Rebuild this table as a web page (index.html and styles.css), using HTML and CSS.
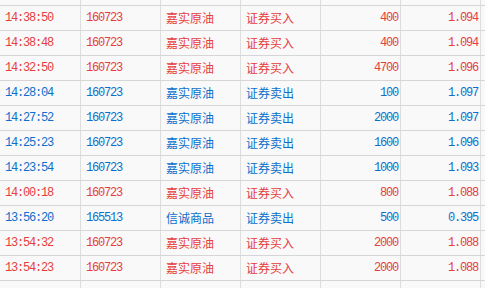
FILE: index.html
```html
<!DOCTYPE html>
<html>
<head>
<meta charset="utf-8">
<link rel="stylesheet" href="styles.css">
</head>
<body>
<div class="table">
  <div class="row top"><div class="c"></div><div class="c"></div><div class="c"></div><div class="c"></div><div class="c"></div><div class="c"></div><div class="c last"></div></div>
  <div class="row red"><div class="c num">14:38:50</div><div class="c num">160723</div><div class="c cn">嘉实原油</div><div class="c cn">证券买入</div><div class="c num r">400</div><div class="c num r">1.094</div><div class="c last"></div></div>
  <div class="row red"><div class="c num">14:38:48</div><div class="c num">160723</div><div class="c cn">嘉实原油</div><div class="c cn">证券买入</div><div class="c num r">400</div><div class="c num r">1.094</div><div class="c last"></div></div>
  <div class="row red"><div class="c num">14:32:50</div><div class="c num">160723</div><div class="c cn">嘉实原油</div><div class="c cn">证券买入</div><div class="c num r">4700</div><div class="c num r">1.096</div><div class="c last"></div></div>
  <div class="row blue"><div class="c num">14:28:04</div><div class="c num">160723</div><div class="c cn">嘉实原油</div><div class="c cn">证券卖出</div><div class="c num r">100</div><div class="c num r">1.097</div><div class="c last"></div></div>
  <div class="row blue"><div class="c num">14:27:52</div><div class="c num">160723</div><div class="c cn">嘉实原油</div><div class="c cn">证券卖出</div><div class="c num r">2000</div><div class="c num r">1.097</div><div class="c last"></div></div>
  <div class="row blue"><div class="c num">14:25:23</div><div class="c num">160723</div><div class="c cn">嘉实原油</div><div class="c cn">证券卖出</div><div class="c num r">1600</div><div class="c num r">1.096</div><div class="c last"></div></div>
  <div class="row blue"><div class="c num">14:23:54</div><div class="c num">160723</div><div class="c cn">嘉实原油</div><div class="c cn">证券卖出</div><div class="c num r">1000</div><div class="c num r">1.093</div><div class="c last"></div></div>
  <div class="row red"><div class="c num">14:00:18</div><div class="c num">160723</div><div class="c cn">嘉实原油</div><div class="c cn">证券买入</div><div class="c num r">800</div><div class="c num r">1.088</div><div class="c last"></div></div>
  <div class="row blue"><div class="c num">13:56:20</div><div class="c num">165513</div><div class="c cn">信诚商品</div><div class="c cn">证券卖出</div><div class="c num r">500</div><div class="c num r">0.395</div><div class="c last"></div></div>
  <div class="row red"><div class="c num">13:54:32</div><div class="c num">160723</div><div class="c cn">嘉实原油</div><div class="c cn">证券买入</div><div class="c num r">2000</div><div class="c num r">1.088</div><div class="c last"></div></div>
  <div class="row red"><div class="c num">13:54:23</div><div class="c num">160723</div><div class="c cn">嘉实原油</div><div class="c cn">证券买入</div><div class="c num r">2000</div><div class="c num r">1.088</div><div class="c last"></div></div>
  <div class="row bottom"><div class="c"></div><div class="c"></div><div class="c"></div><div class="c"></div><div class="c"></div><div class="c"></div><div class="c last"></div></div>
</div>
</body>
</html>
```

FILE: styles.css
```css
html, body {
  margin: 0;
  padding: 0;
  background: #f9f9f9;
  overflow: hidden;
}
.table {
  width: 485px;
  height: 288px;
  overflow: hidden;
  display: flex;
  flex-direction: column;
}
.row {
  display: flex;
  height: 25px;
  flex: none;
  border-bottom: 1px solid #d6d6d6;
  box-sizing: border-box;
}
.row.top { height: 6px; }
.row.bottom { height: 10px; border-bottom: none; }
.c {
  width: 80px;
  flex: none;
  box-sizing: border-box;
  border-right: 1px solid #dedede;
  padding-left: 5px;
  line-height: 24px;
  white-space: nowrap;
  overflow: hidden;
}
.c:first-child { width: 81px; }
.c.last { width: 5px; border-right: none; padding: 0; }
.num {
  font-family: "Liberation Mono", monospace;
  font-size: 12px;
  letter-spacing: -1.2px;
}
.cn {
  font-family: "Noto Sans CJK SC", sans-serif;
  font-size: 12px;
}
.r {
  text-align: right;
  padding-left: 0;
  padding-right: 2px;
}
.red { color: #e63d3d; }
.blue { color: #0b6fcb; }
```
